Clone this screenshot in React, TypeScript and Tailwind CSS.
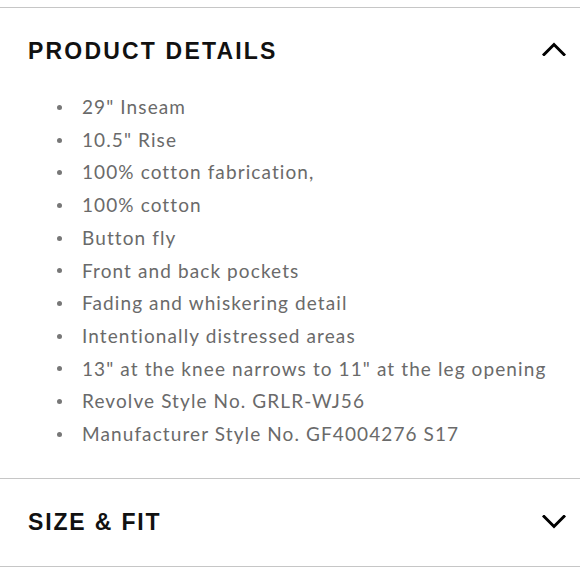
import React from 'react'

const details = [
  '29" Inseam',
  '10.5" Rise',
  '100% cotton fabrication,',
  '100% cotton',
  'Button fly',
  'Front and back pockets',
  'Fading and whiskering detail',
  'Intentionally distressed areas',
  '13" at the knee narrows to 11" at the leg opening',
  'Revolve Style No. GRLR-WJ56',
  'Manufacturer Style No. GF4004276 S17',
]

function Chevron({ up }: { up?: boolean }) {
  return (
    <svg width="24" height="14" viewBox="0 0 24 14" fill="none">
      <path
        d={up ? 'M2 12.5 L12 2.5 L22 12.5' : 'M2 1.5 L12 11.5 L22 1.5'}
        stroke="#000"
        strokeWidth="3"
        strokeLinecap="square"
      />
    </svg>
  )
}

export default function App() {
  return (
    <div className="w-[580px] h-[580px] bg-white pt-[7px] overflow-hidden">
      {/* Product details (open) */}
      <section className="border-t border-[#c6c6c6]">
        <div className="flex items-center justify-between h-[82px] pl-[28px] pr-[14px]">
          <h2 className="mt-[5px] font-['Liberation_Sans',sans-serif] font-bold text-[23px] tracking-[0.095em] text-[#111]">
            PRODUCT DETAILS
          </h2>
          <Chevron up />
        </div>
        <ul className="pt-[1px] pb-[27px] font-['Lato',sans-serif] text-[19px] leading-[32.7px] tracking-[1.1px] text-[#6a6a6a]">
          {details.map((d) => (
            <li key={d} className="flex items-center">
              <span className="ml-[57px] mr-[20px] w-[5px] h-[5px] rounded-full bg-[#777]" />
              {d}
            </li>
          ))}
        </ul>
      </section>

      {/* Size & fit (closed) */}
      <section className="border-t border-b border-[#c6c6c6]">
        <div className="flex items-center justify-between h-[87px] pl-[28px] pr-[14px]">
          <h2 className="font-['Liberation_Sans',sans-serif] font-bold text-[23px] tracking-[0.08em] text-[#111]">
            SIZE &amp; FIT
          </h2>
          <Chevron />
        </div>
      </section>
    </div>
  )
}
